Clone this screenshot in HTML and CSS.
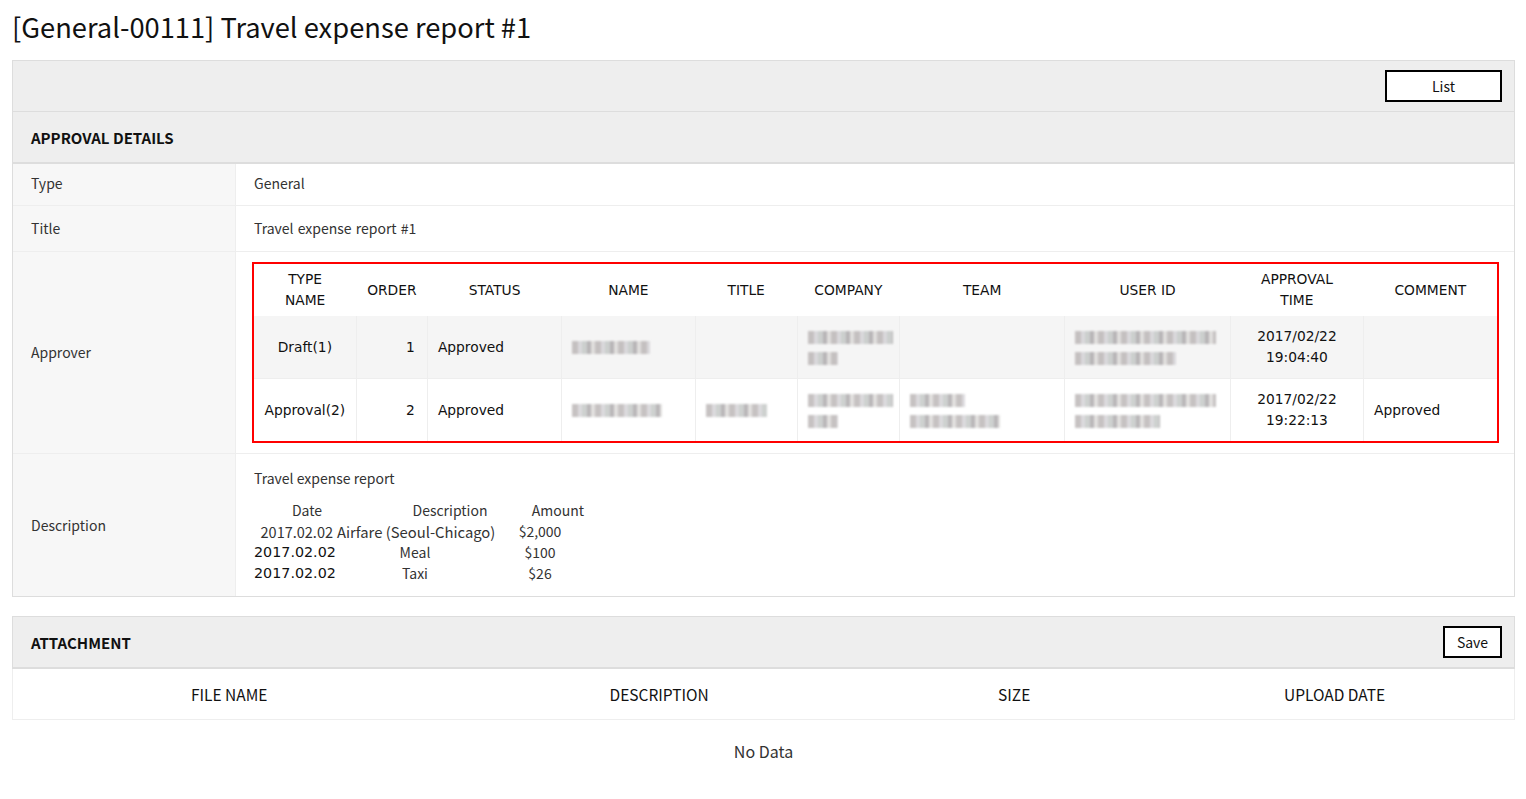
FILE: index.html
```html
<!DOCTYPE html>
<html lang="en">
<head>
<meta charset="utf-8">
<title>[General-00111] Travel expense report #1</title>
<link rel="stylesheet" href="styles.css">
</head>
<body>
<h1 class="page-title">[General-00111] Travel expense report #1</h1>

<section class="panel">
  <div class="toolbar">
    <button class="btn btn-list">List</button>
  </div>
  <div class="section-head">
    <h2>APPROVAL DETAILS</h2>
  </div>
  <div class="row row-first">
    <div class="label">Type</div>
    <div class="value">General</div>
  </div>
  <div class="row">
    <div class="label">Title</div>
    <div class="value">Travel expense report #1</div>
  </div>
  <div class="row">
    <div class="label">Approver</div>
    <div class="value value-approver">
      <table class="approvers">
        <colgroup>
          <col class="c-type"><col class="c-order"><col class="c-status"><col class="c-name"><col class="c-title">
          <col class="c-company"><col class="c-team"><col class="c-user"><col class="c-time"><col class="c-comment">
        </colgroup>
        <thead>
          <tr>
            <th>TYPE<br>NAME</th><th>ORDER</th><th>STATUS</th><th>NAME</th><th>TITLE</th>
            <th>COMPANY</th><th>TEAM</th><th>USER ID</th><th>APPROVAL<br>TIME</th><th>COMMENT</th>
          </tr>
        </thead>
        <tbody>
          <tr class="odd">
            <td class="center">Draft(1)</td>
            <td class="right">1</td>
            <td>Approved</td>
            <td><span class="blur w78"></span></td>
            <td></td>
            <td><span class="blur w85"></span><br><span class="blur w30"></span></td>
            <td></td>
            <td><span class="blur w141"></span><br><span class="blur w101"></span></td>
            <td class="center">2017/02/22<br>19:04:40</td>
            <td></td>
          </tr>
          <tr>
            <td class="center">Approval(2)</td>
            <td class="right">2</td>
            <td>Approved</td>
            <td><span class="blur w90"></span></td>
            <td><span class="blur w61"></span></td>
            <td><span class="blur w85"></span><br><span class="blur w30"></span></td>
            <td><span class="blur w55"></span><br><span class="blur w90"></span></td>
            <td><span class="blur w141"></span><br><span class="blur w85"></span></td>
            <td class="center">2017/02/22<br>19:22:13</td>
            <td>Approved</td>
          </tr>
        </tbody>
      </table>
    </div>
  </div>
  <div class="row row-last">
    <div class="label">Description</div>
    <div class="value value-desc">
      <p class="desc-intro">Travel expense report</p>
      <div class="expenses">
        <div class="eh eh-date">Date</div>
        <div class="eh eh-desc">Description</div>
        <div class="eh eh-amt">Amount</div>
        <div class="ed ed-first">2017.02.02</div>
        <div class="ed ed-second">Airfare (Seoul-Chicago)</div>
        <div class="ed">$2,000</div>
        <div class="ed ed-date">2017.02.02</div>
        <div class="ed">Meal</div>
        <div class="ed">$100</div>
        <div class="ed ed-date">2017.02.02</div>
        <div class="ed">Taxi</div>
        <div class="ed">$26</div>
      </div>
    </div>
  </div>
</section>

<section class="panel panel-attach">
  <div class="section-head attach-head">
    <h2>ATTACHMENT</h2>
    <button class="btn btn-save">Save</button>
  </div>
  <div class="attach-cols">
    <div>FILE NAME</div>
    <div>DESCRIPTION</div>
    <div>SIZE</div>
    <div>UPLOAD DATE</div>
  </div>
  <div class="no-data">No Data</div>
</section>
</body>
</html>
```

FILE: styles.css
```css
* { box-sizing: border-box; }

body {
  margin: 0;
  padding: 0 11px 0 12px;
  background: #fff;
  color: #333;
  font-family: "Noto Sans CJK KR", "Noto Sans", sans-serif;
  font-size: 14px;
}

.page-title {
  margin: 0;
  padding: 6px 0 14px;
  height: 60px;
  font-size: 27.3px;
  line-height: 40px;
  font-weight: 400;
  color: #111;
}

.panel {
  border: 1px solid #ddd;
}

.toolbar {
  height: 51px;
  background: #eee;
  border-bottom: 1px solid #ddd;
  display: flex;
  justify-content: flex-end;
  align-items: center;
  padding: 0 12px 0 0;
}

.btn {
  background: #fff;
  border: 2px solid #000;
  font-family: "Noto Sans CJK KR", "Noto Sans", sans-serif;
  font-size: 14px;
  color: #111;
  height: 32px;
  padding: 0;
  cursor: pointer;
}

.btn-list { width: 117px; }
.btn-save { width: 59px; }

.section-head {
  height: 52px;
  background: #eee;
  border-bottom: 2px solid #ddd;
  display: flex;
  align-items: center;
  justify-content: space-between;
  padding: 0 12px 0 18px;
}

.section-head h2 {
  margin: 0;
  font-size: 15px;
  font-weight: 700;
  color: #111;
}

.row {
  display: grid;
  grid-template-columns: 223px 1fr;
  border-bottom: 1px solid #eee;
}

.row-last { border-bottom: 0; }

.label {
  background: #f7f7f7;
  border-right: 1px solid #eee;
  padding: 12px 18px;
  line-height: 21px;
  display: flex;
  align-items: center;
  color: #333;
}

.value {
  padding: 12px 18px;
  line-height: 21px;
  color: #333;
  word-spacing: 1px;
}

.row-first .label,
.row-first .value { padding-top: 9px; padding-bottom: 11px; }

.value-approver { padding: 10px 15px 10px 16px; word-spacing: 0; }

.approvers {
  width: 100%;
  border-collapse: collapse;
  table-layout: fixed;
  border: 2px solid #f00;
  font-family: "DejaVu Sans", Verdana, sans-serif;
  font-size: 13.8px;
  line-height: 21px;
  color: #111;
}

.c-type { width: 103px; }
.c-order { width: 71px; }
.c-status { width: 134px; }
.c-name { width: 133px; }
.c-title { width: 102px; }
.c-company { width: 102px; }
.c-team { width: 165px; }
.c-user { width: 165px; }
.c-time { width: 133px; }
.c-comment { width: 134px; }

.approvers thead tr { border-top: 1px solid #ddd; }

.approvers th {
  font-weight: 400;
  height: 52px;
  padding: 5px 2px;
  text-align: center;
  vertical-align: middle;
  background: #fff;
}

.approvers td {
  padding: 10px 9px 10px 10px;
  height: 62px;
  vertical-align: middle;
  border-left: 1px solid #eee;
  text-align: left;
}

.approvers td:first-child { border-left: 0; }

.approvers tbody tr:last-child td { height: 61px; }

.approvers tr.odd td { background: #f5f5f5; border-bottom: 1px solid #eee; }

.approvers td.center { text-align: center; padding-left: 2px; padding-right: 2px; }
.approvers td.right { text-align: right; padding-right: 12px; }

.blur {
  display: inline-block;
  height: 13px;
  vertical-align: middle;
  background:
    repeating-linear-gradient(90deg, #b9b4b4 0 6px, #d4d2d6 6px 10px, #c2c6c4 10px 15px, #a9a5a8 15px 19px, #dcdad8 19px 23px);
  filter: blur(1.1px);
  opacity: 0.8;
}

.w30 { width: 30px; }
.w55 { width: 55px; }
.w61 { width: 61px; }
.w78 { width: 78px; }
.w85 { width: 85px; }
.w90 { width: 90px; }
.w101 { width: 101px; }
.w141 { width: 141px; }

.value-desc { padding: 14px 18px 12px 18px; word-spacing: 0; }

.desc-intro { margin: 0 0 11px; }

.expenses {
  display: grid;
  grid-template-columns: 82px 158px 92px;
  line-height: 21px;
  color: #333;
}

.eh, .ed { text-align: center; white-space: nowrap; }

.eh-date { padding-left: 24px; }
.eh-desc { padding-left: 70px; }
.eh-amt { padding-left: 36px; }

.ed-first { text-align: right; padding-right: 3px; font-size: 14.5px; }
.ed-second { font-size: 14.8px; text-align: left; padding-left: 1px; }

.ed-date {
  font-family: "DejaVu Sans", Verdana, sans-serif;
  font-size: 14.3px;
  color: #111;
  text-align: left;
}

.panel-attach {
  margin-top: 19px;
  border: 0;
}

.attach-head {
  border: 1px solid #ddd;
  border-bottom: 2px solid #ddd;
  height: 53px;
}

.attach-cols {
  display: grid;
  grid-template-columns: 28.8% 28.5% 18.8% 23.9%;
  height: 51px;
  align-items: center;
  text-align: center;
  border: 1px solid #eee;
  border-top: 0;
  color: #111;
  font-size: 15.5px;
}

.no-data {
  text-align: center;
  padding: 21px 0 0;
  line-height: 21px;
  color: #333;
  font-size: 16px;
}
```
